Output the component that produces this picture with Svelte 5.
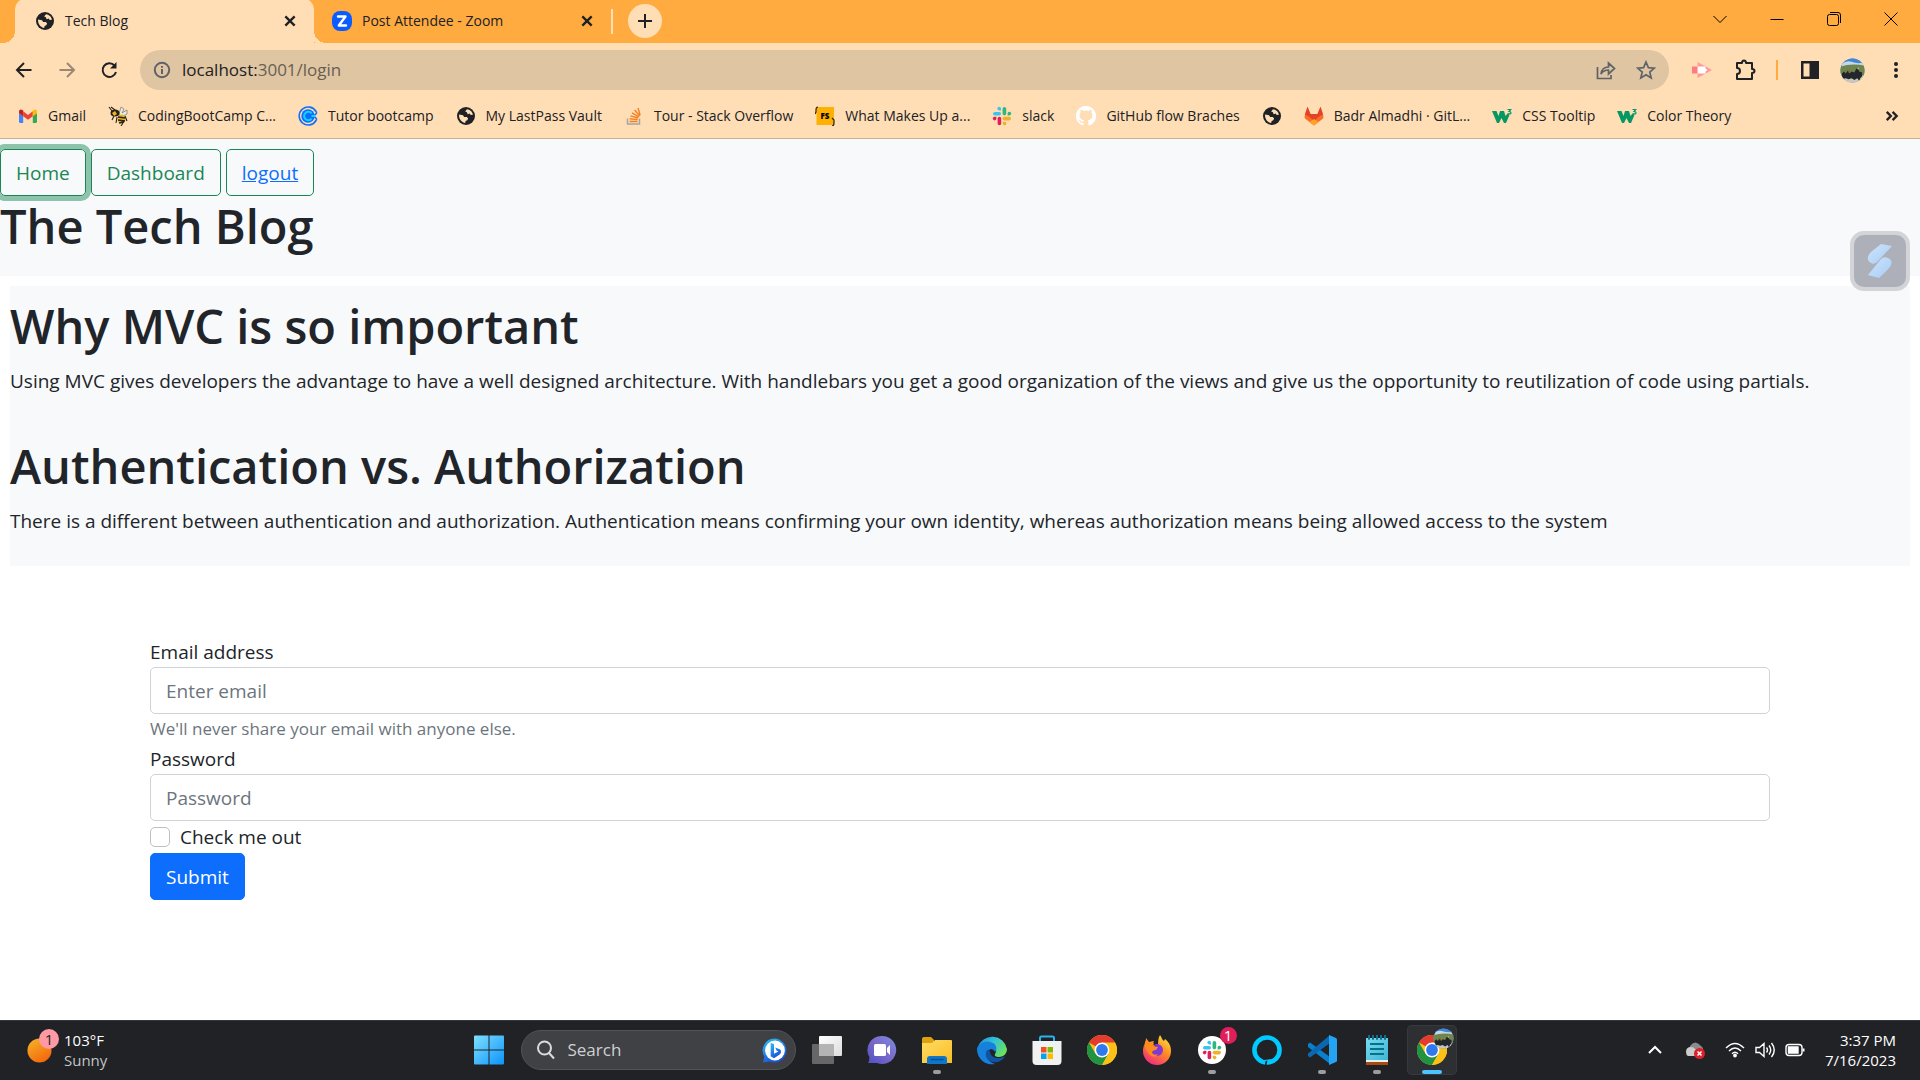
<script>
  let email = $state('');
  let password = $state('');
  let remember = $state(false);

  const bookmarks = [
    { icon: 'gmail', label: 'Gmail' },
    { icon: 'bee', label: 'CodingBootCamp C...' },
    { icon: 'calendly', label: 'Tutor bootcamp' },
    { icon: 'globe', label: 'My LastPass Vault' },
    { icon: 'stack', label: 'Tour - Stack Overflow' },
    { icon: 'fs', label: 'What Makes Up a...' },
    { icon: 'slack', label: 'slack' },
    { icon: 'github', label: 'GitHub flow Braches' },
    { icon: 'globe', label: '' },
    { icon: 'gitlab', label: 'Badr Almadhi · GitL...' },
    { icon: 'w3', label: 'CSS Tooltip' },
    { icon: 'w3', label: 'Color Theory' }
  ];

  const posts = [
    {
      title: 'Why MVC is so important',
      body: 'Using MVC gives developers the advantage to have a well designed architecture. With handlebars you get a good organization of the views and give us the opportunity to reutilization of code using partials.'
    },
    {
      title: 'Authentication vs. Authorization',
      body: 'There is a different between authentication and authorization. Authentication means confirming your own identity, whereas authorization means being allowed access to the system'
    }
  ];

  const apps = [
    { icon: 'taskview', name: 'Task view' },
    { icon: 'chat', name: 'Chat' },
    { icon: 'folder', name: 'File Explorer', open: true },
    { icon: 'edge', name: 'Edge' },
    { icon: 'store', name: 'Store' },
    { icon: 'chrome', name: 'Chrome' },
    { icon: 'firefox', name: 'Firefox' },
    { icon: 'slackapp', name: 'Slack', open: true },
    { icon: 'alexa', name: 'Alexa' },
    { icon: 'vscode', name: 'Visual Studio Code', open: true },
    { icon: 'notepad', name: 'Notepad', open: true },
    { icon: 'chromeuser', name: 'Chrome profile', active: true }
  ];
</script>

{#snippet slackMark()}
  <g>
    <rect x="1" y="6" width="8" height="3.6" rx="1.8" fill="#36c5f0" />
    <path d="M9 4.4H7.2A1.8 1.8 0 1 1 9 2.6Z" fill="#36c5f0" />
    <rect x="10.6" y="1" width="3.6" height="8.4" rx="1.8" fill="#2eb67d" />
    <path d="M15.6 9.4V7.6a1.8 1.8 0 1 1 1.8 1.8Z" fill="#2eb67d" />
    <rect x="10.6" y="10.8" width="8.4" height="3.6" rx="1.8" fill="#ecb22e" />
    <path d="M10.8 15.8h1.8a1.8 1.8 0 1 1-1.8 1.8Z" fill="#ecb22e" />
    <rect x="5.6" y="10.8" width="3.6" height="8.4" rx="1.8" fill="#e01e5a" />
    <path d="M4.4 10.8v1.8a1.8 1.8 0 1 1-1.8-1.8Z" fill="#e01e5a" />
  </g>
{/snippet}

{#snippet photo()}
  <svg viewBox="0 0 26 26" aria-hidden="true">
    <clipPath id="disc"><circle cx="13" cy="13" r="12.5" /></clipPath>
    <g clip-path="url(#disc)">
      <rect width="26" height="26" fill="#4f8fd0" />
      <path d="M0 0h26v6L14 4 6 9 0 8Z" fill="#3f86d4" />
      <path d="M2 6q5-4 10-2t12 1v4H2Z" fill="#c3d9ea" />
      <path d="M0 9q12-4 26-1v11H0Z" fill="#70854b" />
      <rect y="18" width="26" height="8" fill="#c9c6bf" />
      <path d="M2 16l2-2 2 2 2-3 2 3 2-2 3 1 2-4 2 0 1 3 3 1v4l-2 2-1 3-2-3-3 2-3-2-3 1-3-1-4 1Z" fill="#22272b" />
      <circle cx="9" cy="14" r="1" fill="#a4483f" /><circle cx="19" cy="11" r="1" fill="#d5a78a" />
    </g>
  </svg>
{/snippet}

{#snippet chromeMark()}
  <g>
    <circle cx="15" cy="15" r="15" fill="#fbc116" />
    <path d="M15 15 2 7.5A15 15 0 0 1 28 7.5Z" fill="#e33b2e" />
    <path d="M8.5 18.7 2 7.5A15 15 0 0 0 15 30l6.5-11.3Z" fill="#229342" />
    <path d="M15 7.5h13A15 15 0 0 1 15 30l6.5-11.2Z" fill="#fbc116" />
    <circle cx="15" cy="15" r="7.4" fill="#fff" />
    <circle cx="15" cy="15" r="5.9" fill="#2f78ed" />
  </g>
{/snippet}

{#snippet siteIcon(name)}
  <svg class="site-icon" viewBox="0 0 20 20" aria-hidden="true">
    {#if name === 'gmail'}
      <path d="M1 7v8.500q0 1.500 1.400 1.500H5.200V10Z" fill="#4285f4" />
      <path d="M19 7v8.500q0 1.500-1.400 1.500h-2.800V10Z" fill="#34a853" />
      <path d="M5.200 5.200 10 8.900l4.800-3.700v5L10 13.800l-4.800-3.600Z" fill="#ea4335" />
      <path d="M1 5.400C1 3.400 3 2.800 4.500 4l.7.600v5.600L1 7.200Z" fill="#c5221f" />
      <path d="M19 5.400c0-2-2-2.600-3.500-1.400l-.7.600v5.600L19 7.200Z" fill="#fbbc04" />
    {:else if name === 'bee'}
      <path d="M11 8 13 1l3 2-2 4 5-3v4l-6 3Z" fill="#eceae2" stroke="#77736a" stroke-width=".7" />
      <ellipse cx="7" cy="7" rx="4.500" ry="3.600" fill="#27211a" />
      <path d="m4 7 3-2 2 3-3 2Z" fill="#e8b722" />
      <ellipse cx="13.500" cy="13" rx="4" ry="4.500" fill="#e8b722" />
      <path d="m10 11 7 1M10 14l7 1M11 17l5-1" stroke="#27211a" stroke-width="1.600" />
      <path d="M4 5 1 1M7 4 3 1M6 10l-2 4M9 11l-1 6M15 17l-2 3M17 10l2 5" fill="none" stroke="#27211a" stroke-width="1.100" />
    {:else if name === 'calendly'}
      <path d="M18 5.500A9 9 0 1 0 18 14.500" fill="none" stroke="#1670f7" stroke-width="1.600" />
      <path d="M17.500 5q2.500 2-1 4M17.500 15q2.500-2-1-4" fill="none" stroke="#1670f7" stroke-width="1.600" />
      <circle cx="10" cy="10" r="6.700" fill="#0b6cff" />
      <path d="M13.600 7.400A4.200 4.200 0 1 0 13.600 12.600" fill="none" stroke="#13d0ff" stroke-width="2" />
      <path d="M13.500 9h4v2h-4" fill="#13d0ff" />
    {:else if name === 'globe'}
      <circle cx="10" cy="10" r="9" fill="#202124" />
      <path d="M11 3.200c3 .3 5.600 2.700 5.900 5.500l-2.200.3-1-1.500-2 .8-1-2.300-1.600-.5Z" fill="#ffdeb6" />
      <path d="M3.100 8.500 7 9.300l1.200 1.600 2.600.2 1.300 1.500-.8 1.600-1.700.7-.4 2C5.800 16.600 2.600 13 3.100 8.500Z" fill="#ffdeb6" />
    {:else if name === 'stack'}
      <path d="M3.500 12.500V18h12v-5.500" fill="none" stroke="#a9a49d" stroke-width="1.500" />
      <path d="M5.500 15.500h8M5.700 12.800l8 .8M6.400 9.800l7.700 2.200M8 6.800l6.900 4M10.600 4l5.200 6M14 2l2.200 7.300" stroke="#f48024" stroke-width="1.400" />
    {:else if name === 'fs'}
      <rect x="1.500" y="1" width="17.500" height="18" fill="#ffb000" />
      <path d="M3 1Q1 1 1 4v2L0 8M17 12l2 2v3q0 3-2 3" fill="none" stroke="#2a210b" stroke-width="1.200" />
      <text x="10" y="13" text-anchor="middle" font-size="8" font-weight="800">FS</text>
    {:else if name === 'slack'}
      {@render slackMark()}
    {:else if name === 'github'}
      <path d="M10 0a10 10 0 0 0-3.200 19.500c.5.100.7-.2.700-.5v-2c-2.800.6-3.400-1.200-3.400-1.200-.4-1.100-1.100-1.400-1.100-1.400-.9-.6.1-.6.100-.6 1 .1 1.500 1 1.500 1 .9 1.500 2.300 1.100 2.900.8.100-.6.400-1.100.7-1.300-2.300-.3-4.600-1.100-4.600-5 0-1.100.4-2 1-2.700-.1-.3-.4-1.300.1-2.700 0 0 .9-.3 2.800 1a9.600 9.600 0 0 1 5 0c1.900-1.300 2.800-1 2.800-1 .5 1.400.2 2.400.1 2.700.6.700 1 1.600 1 2.700 0 3.900-2.300 4.700-4.600 5 .4.300.7.900.7 1.900V19c0 .3.200.6.700.5A10 10 0 0 0 10 0Z" fill="#fff" />
    {:else if name === 'gitlab'}
      <path d="m10 19.500-9-7q-1-1 0-4L3.500.8 6.500 8h7l3-7.200L19 8.500q1 3 0 4Z" fill="#fc6d26" />
      <path d="M1 8.500 3.500.8 6.500 8h7l3-7.200L19 8.500l-5 2.800-4 4-4-4Z" fill="#e24329" />
      <path d="m10 13-4.500 3 4.500 3.500 4.500-3.500Z" fill="#fca326" />
    {:else if name === 'w3'}
      <path d="M0 5h4.500l2 5L8 5h4l1.500 5 2-2.500L17.500 9 14 17h-2l-2.500-5L7 17H5Z" fill="#059862" />
      <path d="M15.500 3.500h3.200L17 5.500q2.200.2 1.900 1.800Q18 8.500 15.800 7.500" fill="none" stroke="#059862" stroke-width="1.200" />
    {:else if name === 'zoom'}
      <rect width="20" height="20" rx="8" fill="#0b5cff" />
      <path d="M6 5.500h7.500L6.800 14.500H14" fill="none" stroke="#fff" stroke-width="2.400" stroke-linejoin="round" stroke-linecap="round" />
    {/if}
  </svg>
{/snippet}

{#snippet appIcon(name)}
  <svg class="app-icon" viewBox="0 0 30 30" aria-hidden="true">
    {#if name === 'taskview'}
      <rect x="7" y="1" width="23" height="20" rx="1" fill="url(#paper)" />
      <rect x="0" y="9" width="22" height="20" rx="1" fill="#676767" />
      <path d="M7 9h15v12H7Z" fill="#b4b4b4" />
    {:else if name === 'chat'}
      <path d="M15 1a14 14 0 1 1-5 27H1q1.500-2 1.400-6A14 14 0 0 1 15 1Z" fill="url(#chat)" />
      <rect x="7" y="9" width="12" height="12" rx="1.500" fill="#fff" />
      <path d="m20 13 3-3v10l-3-3Z" fill="#fff" />
    {:else if name === 'folder'}
      <path d="M0 4q0-2 2-2h7l3 3v6H0Z" fill="#e0a10e" />
      <path d="M0 8h10l3-3h16q1 0 1 1v22H0Z" fill="url(#folder)" />
      <path d="M5 29v-5q0-3 3-3h14q3 0 3 3v5Z" fill="#0f77c9" />
      <path d="M9 24.500h12" stroke="#0a4d8c" stroke-width="1.500" stroke-linecap="round" />
    {:else if name === 'edge'}
      <path d="M1 12A15 15 0 0 1 30 14c0 5-4 8-8 8-3 0-5-1-4-3 3-4 0-8-4-8-6 0-11 5-9 12-4-3-5-7-4-11Z" fill="url(#edge)" />
      <path d="M0 15C0 8 9 4 16 8c4 2 4 7 2 9-1-3-5-4-7-1-3 5 0 11 7 13A15 15 0 0 1 0 15Z" fill="#1681dc" />
      <path d="M10 15c-4 7 2 14 11 12 3-1 6-3 7-6-6 4-15 2-15-5Z" fill="#1252a0" />
    {:else if name === 'store'}
      <path d="M8 7V3q0-1.500 1.500-1.500h11Q22 1.500 22 3v4" fill="none" stroke="#27b3f0" stroke-width="2" />
      <path d="M.5 6h29v20q0 4-4 4h-21q-4 0-4-4Z" fill="#f1f1f1" />
      <path d="M9 12h5.500v5.500H9Z" fill="#f25022" /><path d="M15.500 12H21v5.500h-5.500Z" fill="#7fba00" />
      <path d="M9 18.500h5.500V24H9Z" fill="#00a4ef" /><path d="M15.500 18.500H21V24h-5.500Z" fill="#ffb900" />
    {:else if name === 'chrome'}
      {@render chromeMark()}
    {:else if name === 'firefox'}
      <path d="M18 0c2 3 2 5 4 6l1-2c5 4 6 8 6 12A14 14 0 0 1 1 16C1 10 4 8 4 3l3 4 5-1-2 5 6 1c0-5 0-9 2-12Z" fill="url(#fox)" />
      <circle cx="15" cy="15" r="6" fill="#8238d3" />
      <path d="M3 6q4 4 9 2-2 4 4 4l-2 3q-4 0-4 3 2 3 6 1-3 5-8 1-6-5-5-14Z" fill="#ff8b1d" />
    {:else if name === 'slackapp'}
      <circle cx="15" cy="15" r="14" fill="#fff" />
      <g transform="translate(5 5)">{@render slackMark()}</g>
    {:else if name === 'alexa'}
      <circle cx="15" cy="15" r="12.600" fill="none" stroke="#00caff" stroke-width="4.500" />
      <path d="M13 30c1-3 0-4-1-5l8-1-7 6Z" fill="#00caff" />
      <path d="m13 30 .4-3.500 2-1.300L14.500 30Z" fill="#202226" />
    {:else if name === 'vscode'}
      <path d="m1 9 2-1.500L23 22v7L1 12Z" fill="#0a7fd0" />
      <path d="m1 21 2 1.500L23 8V0L1 18.500Z" fill="#0a68b2" />
      <path d="m22 0 7 3q1 .5 1 1.500v21q0 1-1 1.500l-7 3V0Z" fill="#25a4f2" />
    {:else if name === 'notepad'}
      <path d="M4 27h22v3H4Z" fill="#a44d12" />
      <path d="M4 3h22v23H4Z" fill="url(#note)" />
      <path d="M4 25h22v2H4Z" fill="#eee" />
      <path d="M7 0v4M11 0v4M15 0v4M19 0v4M23 0v4" stroke="#126f8b" stroke-width="2" stroke-linecap="round" />
      <path d="M8 9h14M8 14h14M8 19h14" stroke="#07708b" stroke-width="1.800" />
    {:else if name === 'chromeuser'}
      {@render chromeMark()}
    {/if}
  </svg>
{/snippet}

<svg class="defs" width="0" height="0" aria-hidden="true">
  <defs>
    <linearGradient id="paper" x2="1" y2="1"><stop stop-color="#fff" /><stop offset="1" stop-color="#ddd" /></linearGradient>
    <linearGradient id="chat" x1="1" x2="0" y2="1"><stop stop-color="#7b8fe0" /><stop offset=".5" stop-color="#7b68c8" /><stop offset="1" stop-color="#4e4fc4" /></linearGradient>
    <linearGradient id="folder" x2="1" y2="1"><stop stop-color="#ffdc65" /><stop offset="1" stop-color="#fbbd25" /></linearGradient>
    <linearGradient id="edge" x2="1" y2=".6"><stop stop-color="#1b8fd8" /><stop offset=".5" stop-color="#35c1d8" /><stop offset="1" stop-color="#6be35c" /></linearGradient>
    <linearGradient id="fox" x1=".8" x2=".2" y2="1"><stop stop-color="#ffe03b" /><stop offset=".45" stop-color="#ff8a22" /><stop offset="1" stop-color="#f0228c" /></linearGradient>
    <linearGradient id="note" y2="1"><stop stop-color="#7adcee" /><stop offset="1" stop-color="#3cb5d4" /></linearGradient>
    <linearGradient id="win" x2="1" y2="1"><stop stop-color="#7fe0ff" /><stop offset="1" stop-color="#0c93fb" /></linearGradient>
    <linearGradient id="sun" x2=".6" y2="1"><stop stop-color="#f5b62a" /><stop offset="1" stop-color="#f4690c" /></linearGradient>
    <linearGradient id="bing" x2=".5" y2="1"><stop stop-color="#2ac1f0" /><stop offset="1" stop-color="#1a52d8" /></linearGradient>
    <linearGradient id="bolt" x2="1" y2="1"><stop stop-color="#cfe4fa" /><stop offset="1" stop-color="#a6cdf6" /></linearGradient>
  </defs>
</svg>

<div class="screen">
  <header class="browser">
    <div class="tabstrip">
      <div class="tab active">
        {@render siteIcon('globe')}
        <span class="title">Tech Blog</span>
        <button class="bare close" aria-label="Close tab"><svg viewBox="0 0 12 12"><path d="m2 2 8 8M10 2 2 10" /></svg></button>
      </div>
      <div class="tab">
        {@render siteIcon('zoom')}
        <span class="title">Post Attendee - Zoom</span>
        <button class="bare close" aria-label="Close tab"><svg viewBox="0 0 12 12"><path d="m2 2 8 8M10 2 2 10" /></svg></button>
      </div>
      <span class="tabsep"></span>
      <button class="bare newtab" aria-label="New tab"><svg viewBox="0 0 16 16"><path d="M8 1v14M1 8h14" /></svg></button>
      <div class="winctl">
        <button class="bare" aria-label="Search tabs"><svg viewBox="0 0 14 14"><path d="m.5 4 6.500 6.500L13.500 4" /></svg></button>
        <button class="bare" aria-label="Minimize"><svg viewBox="0 0 14 14"><path d="M.5 7.500h13" /></svg></button>
        <button class="bare" aria-label="Restore"><svg viewBox="0 0 14 14"><rect x=".5" y="2.500" width="11" height="11" rx="2" /><path d="M3 .5h8q2.500 0 2.500 2.500v8" /></svg></button>
        <button class="bare" aria-label="Close"><svg viewBox="0 0 14 14"><path d="m.5.5 13 13M13.500.5l-13 13" /></svg></button>
      </div>
    </div>

    <div class="toolbar">
      <nav class="history" aria-label="History">
        <button class="bare" aria-label="Back"><svg viewBox="0 0 20 20"><path d="M17.500 10H3.500M10 3l-7 7 7 7" /></svg></button>
        <button class="bare dim" aria-label="Forward"><svg viewBox="0 0 20 20"><path d="M2.500 10h14M10 3l7 7-7 7" /></svg></button>
        <button class="bare" aria-label="Reload"><svg viewBox="0 0 20 20"><path d="M14.500 5.500A6.800 6.800 0 1 0 16 12" /><path d="M16.500 2v6.500H10Z" class="solid" /></svg></button>
      </nav>
      <div class="omnibox">
        <svg class="info" viewBox="0 0 18 18" aria-hidden="true"><circle cx="9" cy="9" r="7.200" /><path d="M9 8v5M9 5v1.700" /></svg>
        <a class="url" href="#login">localhost:<span>3001/login</span></a>
        <button class="bare" aria-label="Share"><svg viewBox="0 0 20 20"><path d="M1.500 7v11.500H15V15" /><path d="M5 14q1-7 7.500-7V3l6 5.500-6 5.500v-4q-5 0-7.500 4Z" /></svg></button>
        <button class="bare" aria-label="Bookmark"><svg viewBox="0 0 20 20"><path d="m10 2 2.400 5.600 6 .5-4.600 4 1.400 5.900L10 14.800 4.800 18l1.400-5.900-4.600-4 6-.5Z" /></svg></button>
      </div>
      <div class="extensions">
        <button class="bare" aria-label="Recorder"><svg class="fills" viewBox="0 0 20 20"><path d="M5.500 2 20 10 5.500 18Z" fill="#ff9a98" /><path d="M0 6.500h5v7H0Z" fill="#ff7b80" /><path d="M6 6.500h7.500v2l2 1.500-2 1.500v2H6Z" fill="#fff" /></svg></button>
        <button class="bare" aria-label="Extensions"><svg class="bold" viewBox="0 0 22 22"><path d="M3 4h5q0-2.500 2-2.500T12 4h6v6q2.500 0 2.500 2T18 14v6H3v-5q3 0 3-3T3 9Z" /></svg></button>
        <span class="toolsep"></span>
        <button class="bare" aria-label="Side panel"><svg class="fills panel" viewBox="0 0 18 18"><path d="M0 0h18v18H0Z" fill="#202124" /><path d="M2.500 2.500h6v13h-6Z" fill="#ffdeb6" /></svg></button>
        <button class="bare avatar" aria-label="Profile">{@render photo()}</button>
        <button class="bare" aria-label="Menu"><svg class="fills" viewBox="0 0 20 20"><circle cx="10" cy="4" r="2" /><circle cx="10" cy="10" r="2" /><circle cx="10" cy="16" r="2" /></svg></button>
      </div>
    </div>

    <nav class="bookmarks" aria-label="Bookmarks">
      {#each bookmarks as mark}
        <a href="#bookmark" aria-label={mark.label || 'Site'}>
          {@render siteIcon(mark.icon)}
          {#if mark.label}<span>{mark.label}</span>{/if}
        </a>
      {/each}
      <button class="bare more" aria-label="More bookmarks"><svg viewBox="0 0 12 12"><path d="m1.500 2.500 3.500 3.500-3.500 3.500M6.500 2.500 10 6 6.500 9.500" /></svg></button>
    </nav>
  </header>

  <main class="page">
    <header class="masthead">
      <nav aria-label="Site">
        <button class="btn outline focused">Home</button>
        <button class="btn outline">Dashboard</button>
        <a class="btn outline link" href="#logout">logout</a>
      </nav>
      <h1>The Tech Blog</h1>
    </header>

    <section class="posts">
      {#each posts as post}
        <article>
          <h1>{post.title}</h1>
          <p>{post.body}</p>
        </article>
      {/each}
    </section>

    <form onsubmit={(e) => e.preventDefault()}>
      <label for="email">Email address</label>
      <input id="email" type="email" placeholder="Enter email" aria-describedby="hint" bind:value={email} />
      <small id="hint">We'll never share your email with anyone else.</small>
      <label for="password">Password</label>
      <input id="password" type="password" placeholder="Password" bind:value={password} />
      <div class="check">
        <input id="remember" type="checkbox" bind:checked={remember} />
        <label for="remember">Check me out</label>
      </div>
      <button class="btn primary" type="submit">Submit</button>
    </form>

    <button class="bare widget" aria-label="Assistant">
      <svg viewBox="0 0 34 34" aria-hidden="true"><path d="m18 0 11 2-15 16q-3 3-6 1-4-2-3-6 1-3 3-5Z" fill="url(#bolt)" /><path d="m5 31 13-16q3-3 7-1 5 2 3 7-1 3-12 13Z" fill="url(#bolt)" /></svg>
    </button>
  </main>

  <footer class="taskbar">
    <button class="bare weather">
      <span class="sun">
        <svg viewBox="0 0 26 26" aria-hidden="true"><circle cx="13" cy="13" r="12.500" fill="url(#sun)" /></svg>
        <b>1</b>
      </span>
      <span class="lines"><span>103°F</span><span class="muted">Sunny</span></span>
    </button>

    <div class="dock">
      <button class="bare tile" aria-label="Start">
        <svg class="app-icon" viewBox="0 0 30 30" aria-hidden="true"><path d="M1 .500h13.500V14.500H0V1.500q0-1 1-1Zm14.500 0H29q1 0 1 1v13H15.500ZM0 15.500h14.500v14H1q-1 0-1-1Zm15.500 0H30v13q0 1-1 1H15.500Z" fill="url(#win)" /></svg>
      </button>
      <div class="search">
        <svg viewBox="0 0 20 20" aria-hidden="true"><circle cx="8.500" cy="8" r="6.500" /><path d="m13 13 5 5.500" /></svg>
        <input type="text" placeholder="Search" aria-label="Search" />
        <svg class="bing" viewBox="0 0 26 26" aria-hidden="true"><path d="M13 .5A12.500 12.500 0 1 1 8 24.500L1 25.500l1.500-6A12.500 12.500 0 0 1 13 .5Z" fill="url(#bing)" /><circle cx="13.500" cy="13" r="10.300" fill="#fff" /><path d="m9 5 3.500 1.500v10L17 14l-2-1-1.200-3.200L19 12q2 3-1 5.500L12.500 21 9 19Z" fill="url(#bing)" /></svg>
      </div>
      {#each apps as app}
        <button class="bare tile" class:open={app.open} class:active={app.active} aria-label={app.name}>
          {@render appIcon(app.icon)}
          {#if app.icon === 'slackapp'}<b>1</b>{/if}
          {#if app.active}<span class="user">{@render photo()}</span>{/if}
        </button>
      {/each}
    </div>

    <div class="tray">
      <button class="bare" aria-label="Hidden icons"><svg viewBox="0 0 20 20"><path d="m4 13 6-6 6 6" stroke-width="2" /></svg></button>
      <button class="bare cloud" aria-label="Cloud status"><svg viewBox="0 0 20 20"><path d="M5 6q5-7 11 0 3 2 2 6L5 12Z" fill="#8c8c8c" stroke="none" /><path d="M1 12q0-5 5-5 3 0 4 2l4 1v6H3q-2-1-2-4Z" fill="#cdcdcd" stroke="none" /><circle cx="14.500" cy="13.500" r="5.500" fill="#db1f2b" stroke="none" /><path d="m12.500 11.500 4 4m0-4-4 4" stroke-width="1.500" /></svg></button>
      <button class="bare system" aria-label="Network, sound and battery">
        <svg viewBox="0 0 20 20"><path d="M1 8q9-9 18 0M4 11q6-6 12 0M7 13.800q3-3 6 0" /><circle cx="10" cy="15.500" r="1.200" fill="#fff" /></svg>
        <svg viewBox="0 0 20 20"><path d="M1 7.500h3.500L9 3.500v13l-4.500-4H1ZM11.500 7.500q2 2.500 0 5M14 5.500q3.500 4.500 0 9M16.500 3q5.500 7 0 14" /></svg>
        <svg viewBox="0 0 20 20"><rect x="1" y="4.500" width="16" height="11" rx="3" /><path d="M3.500 7h9.500v6H3.500Z" fill="#fff" /><path d="M18.500 8.500v3" stroke-width="2" /></svg>
      </button>
      <button class="bare clock"><span>3:37 PM</span><span>7/16/2023</span></button>
    </div>
  </footer>
</div>

<style>
  :global(body) { margin: 0; background: #fff; }
  :global(*) { box-sizing: border-box; }
  .defs { position: absolute; }
  .screen {
    display: flex;
    flex-direction: column;
    min-height: 100vh;
    font-family: "Open Sans", "Noto Sans", sans-serif;
    font-size: 19px;
    line-height: 30px;
    color: #212529;
  }
  svg { display: block; flex: none; }
  .bare {
    display: flex;
    align-items: center;
    justify-content: center;
    padding: 0;
    border: 0;
    background: none;
    color: inherit;
    font: inherit;
    cursor: pointer;
  }
  .site-icon { width: 20px; height: 20px; }

  /* browser chrome */
  .browser { font-size: 14px; line-height: 20px; color: #202124; background: #ffdeb6; border-bottom: 1px solid #c9b08e; }
  .browser .bare svg { fill: none; stroke: #202124; stroke-width: 2; }
  .browser .bare svg.fills { fill: #202124; stroke: none; }
  .browser .bare svg.bold { width: 22px; height: 22px; stroke-width: 2; stroke-linejoin: round; }
  .tabstrip { display: flex; align-items: center; height: 43px; padding: 0 0 1px 15px; background: #ffab40; }
  .tab { position: relative; display: flex; align-items: center; gap: 10px; width: 297px; height: 42px; padding: 0 17px 0 18px; }
  .tab.active { width: 299px; height: 44px; padding-left: 20px; background: #ffdeb6; border-radius: 10px 10px 0 0; }
  .tab.active::before, .tab.active::after {
    content: "";
    position: absolute;
    bottom: 0;
    width: 12px;
    height: 12px;
  }
  .tab.active::before { right: 100%; background: radial-gradient(circle at 0 0, #ffab40 12px, #ffdeb6 12px); }
  .tab.active::after { left: 100%; background: radial-gradient(circle at 100% 0, #ffab40 12px, #ffdeb6 12px); }
  .title { flex: 1; white-space: nowrap; }
  .close svg { width: 14px; height: 14px; }
  .tabsep { width: 2px; height: 25px; background: #ffdeb6; }
  .newtab { width: 34px; height: 34px; margin-left: 15px; border-radius: 50%; background: #ffdeb6; }
  .newtab svg { width: 16px; height: 16px; }
  .winctl { display: flex; margin: 0 1px 0 auto; height: 38px; align-self: flex-start; }
  .winctl .bare { width: 57px; }
  .browser .winctl svg { width: 14px; height: 14px; stroke: #000; stroke-width: 1; }

  .toolbar { display: flex; align-items: center; height: 51px; padding: 3px 3px 0 2px; }
  .history { display: flex; padding-right: 9px; }
  .history .bare { width: 43px; }
  .history svg { width: 20px; height: 20px; }
  .history .dim { opacity: 0.45; }
  .browser .history .solid { fill: #202124; stroke: none; }
  .omnibox { display: flex; flex: 1; align-items: center; height: 40px; padding: 0 3px 0 13px; border-radius: 20px; background: #dfc5a2; font-size: 17px; }
  .info { width: 18px; height: 18px; fill: none; stroke: #5f6368; stroke-width: 2; }
  .url { flex: 1; margin-left: 11px; color: #202124; text-decoration: none; }
  .url span { color: #685f52; }
  .omnibox .bare { width: 40px; }
  .browser .omnibox .bare svg { width: 20px; height: 20px; stroke: #5f6368; stroke-width: 1.700; }
  .extensions { display: flex; align-items: center; padding-left: 11px; }
  .extensions .bare { width: 43px; }
  .extensions svg { width: 20px; height: 20px; }
  .extensions .panel { width: 18px; height: 18px; }
  .toolsep { width: 2px; height: 20px; margin: 0 10px; background: #ffab40; }
  .browser .avatar svg { width: 25px; height: 25px; stroke: none; }

  .bookmarks { display: flex; align-items: center; gap: 22px; height: 44px; padding: 0 18px; }
  .bookmarks a { display: flex; align-items: center; gap: 10px; color: inherit; text-decoration: none; white-space: nowrap; }
  .more { margin-left: auto; padding: 0 3px; }
  .more svg { width: 14px; height: 14px; }

  /* page */
  .page { position: relative; flex: 1; }
  .masthead { padding: 10px 0; background: #f8f9fb; }
  .masthead nav { display: flex; gap: 5px; }
  h1 { margin: 0 0 10px; font-size: 47px; font-weight: 600; line-height: 60px; }
  .btn { height: 47px; padding: 1px 15px 0; border: 1px solid; border-radius: 5px; background: transparent; font: inherit; line-height: 45px; cursor: pointer; }
  .outline { color: #198754; }
  .focused { box-shadow: 0 0 0 5px #8cc3aa; }
  .outline.link { color: #0d6efd; border-color: #198754; }
  .posts { margin: 10px; background: #f8f9fb; }
  article { padding: 10px 0 30px; }
  p { margin: 0; }
  form { display: flex; flex-direction: column; align-items: stretch; margin-top: 71px; padding: 0 150px 60px; }
  form > input { width: 100%; height: 47px; padding: 0 15px; border: 1px solid #ced4da; border-radius: 5px; background: #fff; font: inherit; color: inherit; }
  input::placeholder { color: #6c757d; opacity: 1; }
  small { font-size: 17px; color: #6c757d; }
  .check { display: flex; align-items: center; gap: 10px; height: 32px; }
  .check input { appearance: none; width: 20px; height: 20px; margin: 0; border: 1px solid #bfbfbf; border-radius: 5px; background: #fff; }
  .primary { align-self: flex-start; color: #fff; background: #0d6efd; border-color: #0d6efd; }
  .widget { position: absolute; top: 92px; right: 10px; width: 60px; height: 60px; border: 4px solid #d3d4d7; border-radius: 14px; background: #adb0b8; }
  .widget svg { width: 34px; height: 34px; }

  /* taskbar */
  .taskbar { display: grid; grid-template-columns: 1fr auto 1fr; align-items: center; height: 60px; padding-bottom: 1px; background: #202226; border-top: 1px solid #33373a; color: #fff; font-size: 15px; line-height: 20px; }
  .taskbar b { position: absolute; border-radius: 50%; font-weight: 400; text-align: center; }
  .weather { justify-self: start; gap: 12px; padding-left: 27px; }
  .sun { position: relative; }
  .sun svg { width: 25px; height: 25px; }
  .sun b { left: 12px; top: -9px; width: 20px; height: 20px; background: #ff99a4; color: #202226; }
  .lines { display: flex; flex-direction: column; align-items: flex-start; }
  .muted { color: #c4c5c6; }
  .dock { display: flex; align-items: center; gap: 5px; }
  .tile { position: relative; width: 50px; height: 50px; border-radius: 5px; }
  .app-icon { width: 30px; height: 30px; }
  .tile b { top: 2px; right: 0; width: 17px; height: 17px; line-height: 17px; background: #e01e5a; }
  .tile.active { background: #2d2f33; box-shadow: inset 0 0 0 1px #37393d; }
  .open::after, .active::after { content: ""; position: absolute; bottom: 1px; width: 8px; height: 4px; border-radius: 2px; background: #9b9da0; }
  .active::after { width: 20px; background: #4cc2ff; }
  .user { position: absolute; top: 3px; right: 3px; }
  .user svg { width: 21px; height: 21px; }
  .search { display: flex; align-items: center; gap: 12px; width: 275px; height: 40px; margin: 0 1px 0 2px; padding: 0 8px 0 14px; border: 1px solid #505357; border-radius: 20px; background: #3f4145; }
  .search svg { width: 20px; height: 20px; fill: none; stroke: #dcdcdc; stroke-width: 2; }
  .search .bing { width: 25px; height: 25px; stroke: none; }
  .search input { flex: 1; min-width: 0; padding: 0; border: 0; outline: 0; background: none; color: #fff; font: inherit; font-size: 17px; }
  .search input::placeholder { color: #cfd0d1; }
  .tray { display: flex; align-items: center; justify-self: end; padding-right: 24px; }
  .tray svg { width: 20px; height: 20px; fill: none; stroke: #fff; stroke-width: 1.400; }
  .cloud { margin: 0 20px; }
  .system { gap: 10px; }
  .clock { flex-direction: column; align-items: flex-end; margin-left: 20px; }
</style>
